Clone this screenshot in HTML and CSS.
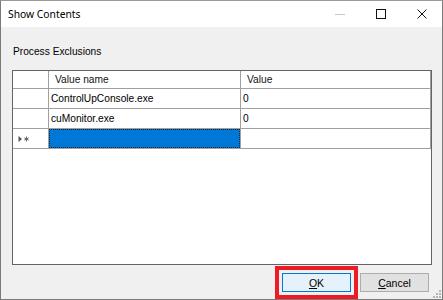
FILE: index.html
```html
<!DOCTYPE html>
<html lang="en">

<head>
    <meta charset="UTF-8">
    <title>Show Contents</title>
    <link rel="stylesheet" href="styles.css">
</head>

<body>
    <div class="window">
        <div class="title-bar">
            <div class="title">Show Contents</div>
            <div class="caption-buttons">
                <span class="caption-btn minimize"><svg width="10" height="10" viewBox="0 0 10 10"><path d="M0 5.5h10" stroke="#c8c8c8" stroke-width="1"/></svg></span>
                <span class="caption-btn"><svg width="10" height="10" viewBox="0 0 10 10"><rect x="0.5" y="0.5" width="9" height="9" fill="none" stroke="#111" stroke-width="1"/></svg></span>
                <span class="caption-btn"><svg width="10" height="10" viewBox="0 0 10 10"><path d="M0.5 0.5L9.5 9.5M9.5 0.5L0.5 9.5" stroke="#111" stroke-width="1"/></svg></span>
            </div>
        </div>
        <div class="content">
            <div class="label">Process Exclusions</div>
            <div class="grid">
                <div class="row header">
                    <div class="cell row-head"></div>
                    <div class="cell name">Value name</div>
                    <div class="cell value">Value</div>
                </div>
                <div class="row">
                    <div class="cell row-head"></div>
                    <div class="cell name">ControlUpConsole.exe</div>
                    <div class="cell value">0</div>
                </div>
                <div class="row">
                    <div class="cell row-head"></div>
                    <div class="cell name">cuMonitor.exe</div>
                    <div class="cell value">0</div>
                </div>
                <div class="row">
                    <div class="cell row-head">
                        <svg width="12" height="8" viewBox="0 0 12 8">
                            <path d="M0.5 1L4 4L0.5 7Z" fill="#555"/>
                            <path d="M8.5 1.5v5M6.3 2.8l4.4 2.4M10.7 2.8l-4.4 2.4" stroke="#666" stroke-width="1"/>
                        </svg>
                    </div>
                    <div class="cell name"><div class="selected"></div></div>
                    <div class="cell value"></div>
                </div>
            </div>
            <div class="buttons">
                <button class="btn btn-ok"><u>O</u>K</button>
                <button class="btn"><u>C</u>ancel</button>
            </div>
        </div>
        <div class="grip">
            <svg width="9" height="9" viewBox="0 0 9 9" fill="#b5b5b5">
                <rect x="7" y="1" width="2" height="2"/>
                <rect x="4" y="4" width="2" height="2"/>
                <rect x="7" y="4" width="2" height="2"/>
                <rect x="1" y="7" width="2" height="2"/>
                <rect x="4" y="7" width="2" height="2"/>
                <rect x="7" y="7" width="2" height="2"/>
            </svg>
        </div>
    </div>
</body>

</html>
```

FILE: styles.css
```css
body,
html {
    margin: 0;
    padding: 0;
    background-color: #ffffff;
    font-family: "Liberation Sans", Arial, sans-serif;
}

.window {
    position: relative;
    box-sizing: border-box;
    width: 443px;
    height: 300px;
    border: 1px solid #7a7a7a;
    border-top-color: #9a9a9a;
    background: #f0f0f0;
    display: flex;
    flex-direction: column;
}

.title-bar {
    height: 26px;
    background: #ffffff;
    display: flex;
    align-items: center;
    justify-content: space-between;
}

.title {
    font-family: "Noto Sans", "Open Sans", sans-serif;
    font-size: 10.3px;
    color: #000;
    padding-left: 7px;
    padding-bottom: 1px;
}

.caption-buttons {
    display: flex;
    align-items: center;
    gap: 31px;
    padding-right: 15px;
}

.caption-btn {
    display: flex;
    width: 10px;
    height: 10px;
}

.content {
    flex: 1;
    padding: 18px 10px 0 11px;
    display: flex;
    flex-direction: column;
}

.label {
    font-size: 10.2px;
    line-height: 13px;
    color: #000;
    padding-left: 1px;
}

.grid {
    margin-top: 12px;
    box-sizing: border-box;
    width: 420px;
    height: 195px;
    border: 1px solid #646464;
    background: #ffffff;
}

.row {
    display: flex;
    height: 20px;
}

.row.header {
    height: 18px;
}

.cell {
    box-sizing: border-box;
    border-right: 1px solid #a0a0a0;
    border-bottom: 1px solid #a0a0a0;
    font-size: 10.2px;
    color: #000;
    display: flex;
    align-items: center;
    padding-left: 2px;
    white-space: nowrap;
}

.row-head {
    width: 36px;
    padding-left: 5px;
}

.name {
    width: 192px;
}

.value {
    width: 190px;
}

.header .cell {
    padding-left: 6px;
    color: #111;
}

.header .row-head {
    padding-left: 0;
}

.row .name:has(.selected) {
    padding: 0;
}

.selected {
    box-sizing: border-box;
    width: 191px;
    height: 19px;
    background: #0078d7;
    border: 1px dotted #222;
}

.buttons {
    display: flex;
    justify-content: flex-end;
    gap: 9px;
    margin-top: 8px;
    padding-right: 3px;
}

.btn {
    box-sizing: border-box;
    width: 69px;
    height: 19px;
    padding: 0;
    font-family: "Liberation Sans", Arial, sans-serif;
    font-size: 10.5px;
    color: #000;
    background: #e1e1e1;
    border: 1px solid #adadad;
}

.btn-ok {
    background: #e5f1fb;
    border-color: #0078d7;
    outline: 4px solid #ed1c24;
    outline-offset: 3px;
}

.grip {
    position: absolute;
    right: 1px;
    bottom: 1px;
    display: flex;
}
```
